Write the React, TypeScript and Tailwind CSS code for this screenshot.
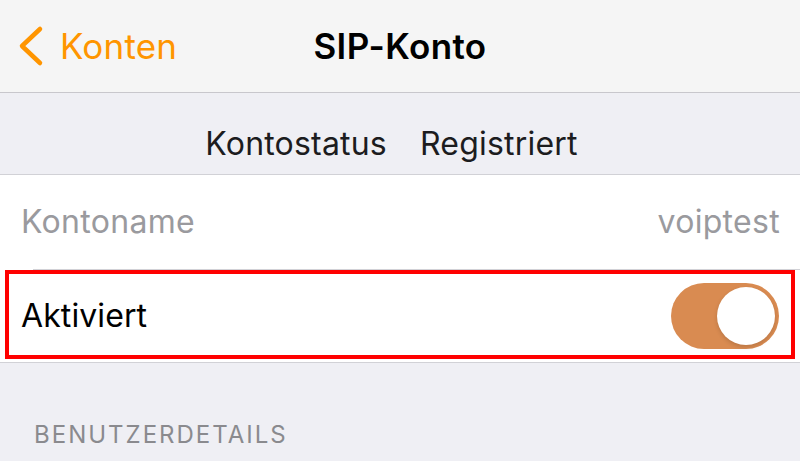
const Toggle = () => {
  return (
    <div className="relative w-[108px] h-[66px] rounded-full bg-[#d98b51]">
      <div className="absolute right-[4px] top-[4px] w-[58px] h-[58px] rounded-full bg-white shadow-[0_2px_4px_rgba(0,0,0,0.15)]" />
    </div>
  );
};

const App = () => {
  return (
    <div className="w-[800px] h-[461px] overflow-hidden bg-[#efeff4] font-['Inter',sans-serif]">
      <header className="relative h-[93px] bg-[#f5f5f5] border-b border-[#c8c7cc] flex items-center">
        <div className="flex items-center pl-[18px] text-[#ff9500]">
          <svg width="26" height="42" viewBox="0 0 26 42" fill="none">
            <path
              d="M22 4 L4 21 L22 38"
              stroke="#ff9500"
              strokeWidth="4.5"
              strokeLinecap="round"
              strokeLinejoin="round"
            />
          </svg>
          <span className="ml-[16px] text-[35px] tracking-[0.2px]">Konten</span>
        </div>
        <h1 className="absolute left-0 right-0 text-center text-[35px] font-semibold tracking-[0.4px] text-black pointer-events-none">
          SIP-Konto
        </h1>
      </header>

      <div className="h-[82px] pt-[20px] pr-[17px] flex items-center justify-center gap-[33px] border-b border-[#d1d1d6] text-[32px] text-[#1c1c1e] tracking-[0.2px]">
        <span>Kontostatus</span>
        <span>Registriert</span>
      </div>

      <div className="bg-white border-b border-[#d1d1d6]">
        <div className="h-[94px] flex items-center justify-between pl-[21px] pr-[20px] text-[32px] tracking-[0.3px] text-[#9a9a9e]">
          <span>Kontoname</span>
          <span>voiptest</span>
        </div>
        <div className="ml-[33px] h-px bg-[#d1d1d6]" />
        <div className="relative h-[92px] flex items-center justify-between pl-[21px] pr-[21px]">
          <span className="text-[32px] tracking-[0.1px] text-black">Aktiviert</span>
          <Toggle />
          <div className="absolute left-[5px] right-[5px] top-0 bottom-[3px] border-[4px] border-[#ff0000] pointer-events-none" />
        </div>
      </div>

      <div className="pt-[54px] pl-[34px] text-[24px] tracking-[2px] text-[#8a8a8e]">
        BENUTZERDETAILS
      </div>
    </div>
  );
};

export default App;
